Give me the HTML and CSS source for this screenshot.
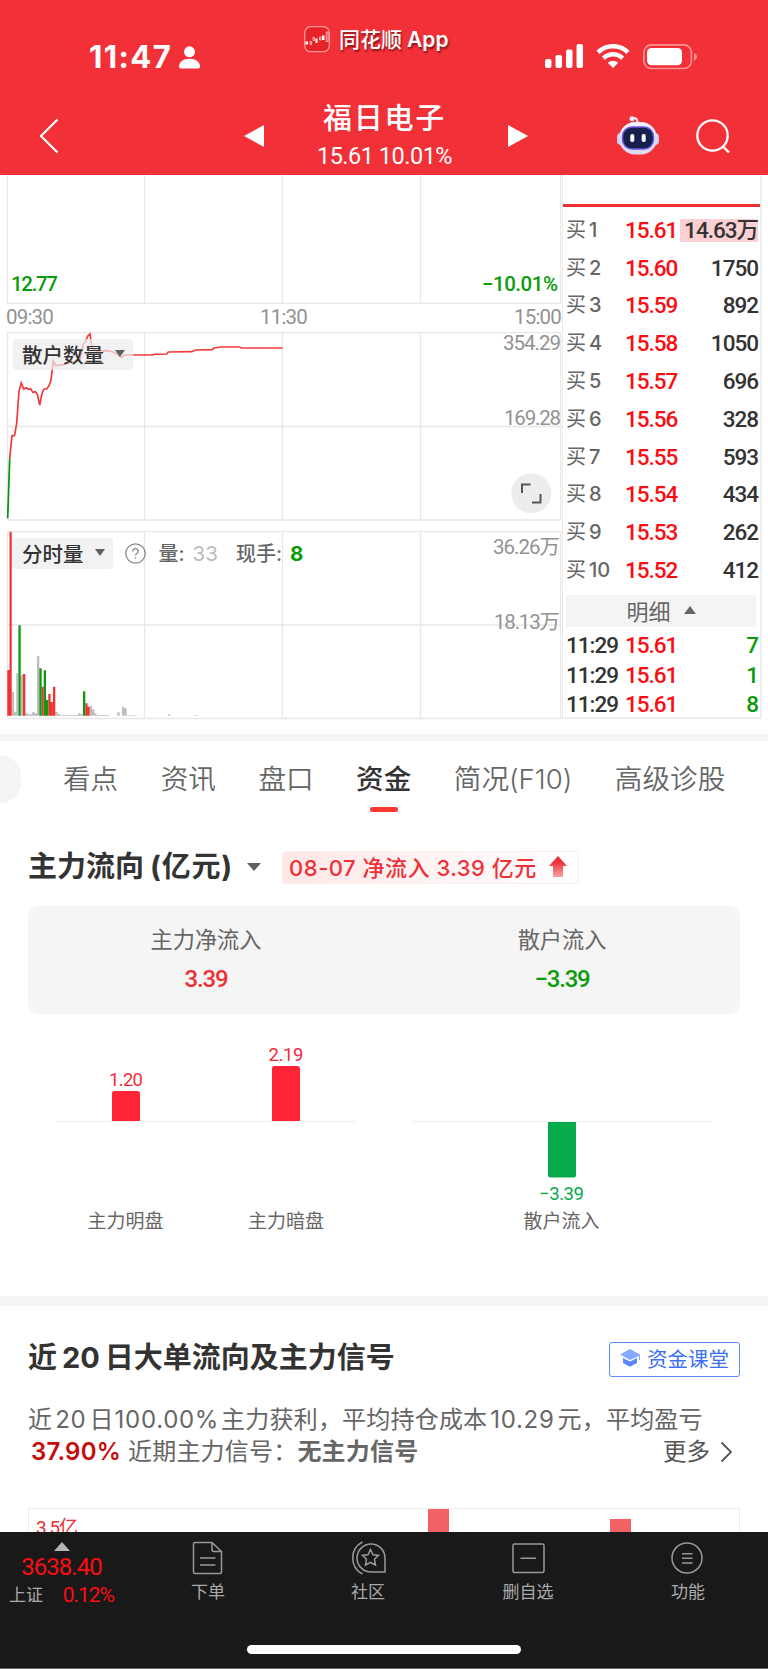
FILE: index.html
```html
<!DOCTYPE html>
<html lang="zh">
<head>
    <meta charset="UTF-8">
    <meta name="viewport" content="width=device-width, initial-scale=1.0">
    <title>福日电子 15.61</title>
    <link rel="stylesheet" href="styles.css">
</head>
<body>
    <header class="header">
        <div class="status">
            <div class="clock">
                <span class="time">11:47</span>
                <svg width="21" height="23" viewBox="0 0 21 23" fill="#fff"><circle cx="10.500" cy="5.800" r="5.500"/><path d="M0 20.500C0 15.500 5 12.800 10.500 12.800S21 15.500 21 20.500Q21 22.500 19 22.500H2Q0 22.500 0 20.500Z"/></svg>
            </div>
            <div class="brand">
                <svg width="26" height="27" viewBox="0 0 26 27"><rect x=".7" y=".7" width="24.600" height="25" rx="6" fill="#e62327" stroke="#ff9698" stroke-width="1.300"/><path d="M1.500 15.500h2.500v3H1.500zM11.500 12.500h2v4.500h-2zM18 9.500h2.500v4.500H18z" fill="#fff"/><path d="M6 15.500h1.500v3H6zM9 11.500h1.500v3H9zM15.500 11h1.500v3h-1.500zM22.300 6h1.700v9.500h-1.700z" fill="none" stroke="#ffd5d5" stroke-width=".8"/></svg>
                <span class="brand-name">同花顺<b>App</b></span>
            </div>
            <div class="signals">
                <svg width="38" height="24" viewBox="0 0 38 24" fill="#fff"><rect y="15" width="6.500" height="9" rx="2"/><rect x="10.500" y="11" width="6.500" height="13" rx="2"/><rect x="21" y="5.500" width="6.500" height="18.500" rx="2"/><rect x="31.500" width="6.500" height="24" rx="2"/></svg>
                <svg width="34" height="24" viewBox="0 0 34 24"><g fill="none" stroke="#fff" stroke-width="4.600"><path d="M2 8.300C10.500.2 23.500.2 32 8.300"/><path d="M7.400 14.200C13 9 21 9 26.600 14.200"/></g><path d="M17 24L11.800 18.700C15 16 19 16 22.200 18.700Z" fill="#fff"/></svg>
                <svg width="55" height="26" viewBox="0 0 55 26"><rect x=".9" y=".9" width="47.500" height="23.600" rx="7.500" fill="none" stroke="#ff9092" stroke-width="1.700"/><rect x="4" y="4" width="35" height="17.300" rx="4.500" fill="#fff"/><path d="M51 8.700Q54 10 54 12.700T51 16.700Z" fill="#ff9092"/></svg>
            </div>
        </div>
        <nav class="nav">
            <svg class="back" width="20" height="36" viewBox="0 0 20 36"><path d="M18.500 1.500L2 18L18.500 34.500" fill="none" stroke="#fff" stroke-width="2.200"/></svg>
            <svg class="prev" width="20" height="22" viewBox="0 0 20 22"><path d="M0 11L20 0V22Z" fill="#fff"/></svg>
            <div class="stock">
                <h1>福日电子</h1>
                <p>15.61 10.01%</p>
            </div>
            <svg class="next" width="20" height="22" viewBox="0 0 20 22"><path d="M20 11L0 0V22Z" fill="#fff"/></svg>
            <svg class="robot" width="42" height="39" viewBox="0 0 42 39">
                <path d="M15 2.500C20 1 20.500 4 20.500 8" fill="none" stroke="#e8e3f5" stroke-width="2.200"/>
                <circle cx="15" cy="2.800" r="2.500" fill="#eeeaf8"/>
                <rect y="17" width="8" height="12" rx="4" fill="#cfcdf0"/><rect x="34" y="17" width="8" height="12" rx="4" fill="#cfcdf0"/>
                <rect x="2" y="6" width="38" height="32.500" rx="16" fill="#dedcf5"/>
                <rect x="4" y="6.500" width="34" height="26" rx="13" fill="#f3f1fc"/>
                <rect x="5.500" y="11" width="31" height="22" rx="9.500" fill="#16214b" stroke="#6c55e8" stroke-width="1.500"/>
                <rect x="13.300" y="18" width="4" height="8" rx="1.800" fill="#fff"/><rect x="24.700" y="18" width="4" height="8" rx="1.800" fill="#fff"/>
            </svg>
            <svg class="search" width="36" height="36" viewBox="0 0 36 36" fill="none" stroke="#fff" stroke-width="2.300"><circle cx="16.500" cy="16.500" r="15.200"/><path d="M26.500 27L33 33.500"/></svg>
        </nav>
    </header>

    <section class="quote">
        <div class="charts">
            <svg class="pane pane-price" width="562" height="129" viewBox="0 0 562 129">
                <path class="grid" d="M7.500 0V128.500H560.500V0M144.500 0V128M282.500 0V128M420.500 0V128"/>
                <text class="num green" x="11" y="116" textLength="47">12.77</text>
                <text class="num green" x="482" y="116" textLength="76">−10.01%</text>
            </svg>
            <div class="hours"><span>09:30</span><span>11:30</span><span>15:00</span></div>
            <div class="pane-box">
                <svg class="pane" width="562" height="189" viewBox="0 0 562 189">
                    <path class="grid" d="M7.500 .5H560.500V188H7.500ZM144.500 0V188M282.500 0V188M420.500 0V188M7 94.500H560"/>
                    <path d="M7.700 186.300L9.700 126.300" fill="none" stroke="#0a8f12" stroke-width="1.700"/>
                    <polyline fill="none" stroke="#f23a3c" stroke-width="1.700" points="9.700,126.300 12,103.700 14.500,103.700 16.700,91.300 19,59 21.300,51 23.700,57 26,55.700 28.300,57.300 30.700,56.700 32.700,60.300 35.300,59.700 37.300,62.300 39.700,73 42,61.300 44,57 46.700,57 49,53.700 51,48 53.300,29 55.700,33.700 63.300,32.700 73.300,29.700 80,28 83.300,12.300 85.300,9.700 87.700,4 90,2 92,16.300 96.700,19 108.300,18.700 115,20.700 121.700,25.700 124,23 152.300,23 154,22.300 166.700,22 168.300,20 191.700,19.700 195.700,18 212.300,17.700 214,16 220.700,15 239.300,15 241.700,16 282.700,16"/>
                    <text class="num grey" x="503" y="18" textLength="58">354.29</text>
                    <text class="num grey" x="504" y="92.500" textLength="57">169.28</text>
                    <circle cx="531.300" cy="161.300" r="20" fill="#ededed"/>
                    <path d="M522 161V152.500H530.500M532 170.500H540.500V162" fill="none" stroke="#555" stroke-width="2"/>
                </svg>
                <div class="tools">
                    <span class="pill">散户数量<i class="caret"></i></span>
                </div>
            </div>
            <div class="pane-box pane-volume">
                <svg class="pane" width="562" height="189" viewBox="0 0 562 189">
                    <path class="grid" d="M7.500 .5H560.500V187.500H7.500ZM144.500 0V187M282.500 0V187M420.500 0V187M7 94H560"/>
                    <path fill="#bdbdbd" d="M11.700 161h2.300v23.700h-2.300zM14 180.700h2.300v4H14zM16.300 142.300h2.100v42.400h-2.100zM20.700 143.700h2.300v41h-2.300zM25.300 181.700h2.300v3h-2.300zM27.600 183.300h4.700v1.400h-4.700zM32.300 181h2.300v3.700h-2.300zM34.600 182.300h2.400v2.400h-2.400zM37 125h2.300v59.700H37zM55.300 180.700h2.300v4h-2.300zM57.600 183H60v1.700h-2.400zM60 184h18v.7H60zM78.300 182.300h2.300v2.400h-2.300zM80.600 183.300H83v1.400h-2.400zM89.700 175H92v9.700h-2.300zM92 178.300h2.300v6.400H92zM94.300 182.300h2.300v2.400h-2.300zM97 184h12v.7H97zM117.300 181.300h2.300v3.400h-2.300zM122 175.700h2.300v9H122zM124.300 177.300h2.300v7.400h-2.300zM127 184.200h10v.5h-10zM168 183.200h2v1.500h-2zM194 184.200h4v.5h-4z"/>
                    <path fill="#f23232" d="M7.300 139h2.200v45.700H7.300zM9.500 .7h2.200v184H9.500zM23 143h2.300v41.700H23zM41.700 155.700h2v29h-2zM48.300 163h2.300v21.700h-2.300zM50.600 171h2.300v13.700h-2.300zM53 155.700h2.300v29H53zM85.300 172.300h2.300v12.400h-2.300zM87.600 175.700h2.100v9h-2.100z"/>
                    <path fill="#129612" d="M18.400 94.300h2.300v90.400h-2.300zM39.300 137.300h2.400v47.400h-2.400zM43.700 139.300H46v45.400h-2.300zM46 169h2.300v15.700H46zM83 160.300h2.300v24.400H83z"/>
                    <text class="num grey" x="493" y="23" textLength="67">36.26万</text>
                    <text class="num grey" x="494" y="98" textLength="66">18.13万</text>
                </svg>
                <div class="tools">
                    <span class="pill">分时量<i class="caret"></i></span>
                    <svg class="help" width="21" height="21" viewBox="0 0 21 21"><circle cx="10.500" cy="10.500" r="9.700" fill="none" stroke="#888" stroke-width="1.300"/><path d="M7.700 8.500C7.700 4.500 13.300 4.700 13.300 8.200C13.300 10.200 10.500 10.300 10.500 12.600M10.500 14.300V15.800" fill="none" stroke="#888" stroke-width="1.300"/></svg>
                    <span class="stat">量:</span><span class="stat-num muted">33</span>
                    <span class="stat stat-hand">现手:</span><span class="stat-num up">8</span>
                </div>
            </div>
        </div>

        <aside class="book">
            <ul class="orders">
                <li><span class="lv">买<b>1</b></span><span class="price">15.61</span><span class="vol"><mark>14.63万</mark></span></li>
                <li><span class="lv">买<b>2</b></span><span class="price">15.60</span><span class="vol">1750</span></li>
                <li><span class="lv">买<b>3</b></span><span class="price">15.59</span><span class="vol">892</span></li>
                <li><span class="lv">买<b>4</b></span><span class="price">15.58</span><span class="vol">1050</span></li>
                <li><span class="lv">买<b>5</b></span><span class="price">15.57</span><span class="vol">696</span></li>
                <li><span class="lv">买<b>6</b></span><span class="price">15.56</span><span class="vol">328</span></li>
                <li><span class="lv">买<b>7</b></span><span class="price">15.55</span><span class="vol">593</span></li>
                <li><span class="lv">买<b>8</b></span><span class="price">15.54</span><span class="vol">434</span></li>
                <li><span class="lv">买<b>9</b></span><span class="price">15.53</span><span class="vol">262</span></li>
                <li><span class="lv">买<b>10</b></span><span class="price">15.52</span><span class="vol">412</span></li>
            </ul>
            <div class="detail-head">明细<i class="caret-up"></i></div>
            <ul class="ticks">
                <li><span>11:29</span><span class="price">15.61</span><span class="vol">7</span></li>
                <li><span>11:29</span><span class="price">15.61</span><span class="vol">1</span></li>
                <li><span>11:29</span><span class="price">15.61</span><span class="vol">8</span></li>
            </ul>
        </aside>
    </section>

    <section class="funds">
        <div class="tabs">
            <span class="tab-more"></span>
            <span class="tab">看点</span>
            <span class="tab">资讯</span>
            <span class="tab">盘口</span>
            <span class="tab active">资金</span>
            <span class="tab">简况(F10)</span>
            <span class="tab">高级诊股</span>
        </div>
        <div class="flow-head">
            <h2>主力流向<span class="unit">(亿元)</span></h2>
            <i class="caret"></i>
            <div class="tag">
                <span class="tag-text">08-07 净流入 3.39 亿元</span>
                <svg width="18" height="22" viewBox="0 0 18 22"><defs><linearGradient id="rise" x1="0" y1="0" x2="0" y2="1"><stop offset=".3" stop-color="#ee3038"/><stop offset="1" stop-color="#f9a5a7"/></linearGradient></defs><path d="M9 0L18 10H14V21H4V10H0Z" fill="url(#rise)"/></svg>
            </div>
        </div>
        <div class="summary">
            <div><p>主力净流入</p><strong class="in">3.39</strong></div>
            <div><p>散户流入</p><strong class="out">−3.39</strong></div>
        </div>
        <svg class="flow-chart" width="768" height="281" viewBox="0 0 768 281">
            <path d="M56 107.500H356M412 107.500H712" stroke="#f1f1f1" stroke-width="1.500"/>
            <path d="M112 107V79.500Q112 77 114.500 77H137.500Q140 77 140 79.500V107ZM272 107V54.500Q272 52 274.500 52H297.500Q300 52 300 54.500V107Z" fill="#ff2436"/>
            <path d="M548 108V161Q548 163.500 550.500 163.500H573.500Q576 163.500 576 161V108Z" fill="#07aa4b"/>
            <g class="bar-value" text-anchor="middle">
                <text x="126" y="72" textLength="34" fill="#f5293a">1.20</text>
                <text x="286" y="46.500" textLength="35" fill="#f5293a">2.19</text>
                <text x="561.500" y="186" textLength="45" fill="#07aa4b">−3.39</text>
            </g>
            <g class="bar-name" text-anchor="middle">
                <text x="125.500" y="214">主力明盘</text>
                <text x="286" y="214">主力暗盘</text>
                <text x="561.500" y="214">散户流入</text>
            </g>
        </svg>
    </section>

    <section class="signal">
        <div class="signal-head">
            <h2>近<span class="n">20</span>日大单流向及主力信号</h2>
            <a class="course">
                <svg width="20" height="18" viewBox="0 0 20 18"><path d="M10 0L20 5.500V11H19V7L10 11L0 5.500Z" fill="#86a8ff"/><path d="M3 9L10 12.500L17 9V14L10 17.800L3 14Z" fill="#5c86fb"/></svg>
                资金课堂
            </a>
        </div>
        <p class="desc">近<span class="n">20</span>日<span class="n0">100.00%</span>主力获利，平均持仓成本<span class="n">10.29</span>元，平均盈亏</p>
        <div class="desc-row">
            <p class="desc"><b class="rate">37.90%</b>近期主力信号：<b>无主力信号</b></p>
            <span class="more">更多<svg width="13" height="22" viewBox="0 0 13 22"><path d="M1.500 1.500L11 11L1.500 20.500" fill="none" stroke="#555" stroke-width="1.800"/></svg></span>
        </div>
        <div class="history">
            <svg width="710" height="160" viewBox="0 0 710 160">
                <text x="7" y="24.500" class="axis" textLength="42">3.5亿</text>
                <path d="M399 0H420V160H399ZM581 10H602V160H581Z" fill="#f26165"/>
            </svg>
        </div>
    </section>

    <footer class="dock">
        <div class="dock-row">
            <div class="index">
                <i class="caret-up"></i>
                <span class="index-value">3638.40</span>
                <div class="index-row"><span>上证</span><span class="index-rate">0.12%</span></div>
            </div>
            <div class="dock-item">
                <svg width="36" height="34" viewBox="0 0 36 34"><g transform="translate(-1 0)"><path d="M23 1.500H6Q4.500 1.500 4.500 3V31Q4.500 32.500 6 32.500H31Q32.500 32.500 32.500 31V10.500ZM23 1.500V9Q23 10.500 24.500 10.500H32.500M11 17H26.500M11 24H26.500"/></g></svg>
                <span>下单</span>
            </div>
            <div class="dock-item">
                <svg width="36" height="34" viewBox="0 0 36 34"><path d="M21 3A14 14 0 0 0 21 31H35V17A14 14 0 0 0 21 3ZM12.500 1A18 18 0 0 0 12.500 33M20.500 8.500L23 13.700L28.500 14.400L24.500 18.300L25.500 24L20.500 21.300L15.500 24L16.500 18.300L12.500 14.400L18 13.700Z"/></svg>
                <span>社区</span>
            </div>
            <div class="dock-item">
                <svg width="36" height="34" viewBox="0 0 36 34"><path d="M4.500 3H32.500Q34 3 34 4.500V30Q34 31.500 32.500 31.500H4.500Q3 31.500 3 30V4.500Q3 3 4.500 3ZM10.500 17.300H26"/></svg>
                <span>删自选</span>
            </div>
            <div class="dock-item">
                <svg width="36" height="34" viewBox="0 0 36 34"><circle cx="17" cy="17" r="15"/><path d="M12 12.700H22.500M12 17.300H22.500M12 22H22.500"/></svg>
                <span>功能</span>
            </div>
        </div>
        <div class="home-bar"></div>
    </footer>
</body>
</html>
```
FILE: styles.css
```css
* {
    box-sizing: border-box;
}
body {
    width: 768px;
    height: 1669px;
    margin: 0;
    display: flex;
    flex-direction: column;
    overflow: hidden;
    background-color: #fff;
    color: #333;
    font-family: Inter, "Noto Sans CJK SC", sans-serif;
}
h1, h2, p, ul {
    margin: 0;
    padding: 0;
    list-style: none;
}
svg {
    display: block;
    flex: none;
}

/* 顶部 */
.header {
    height: 175px;
    flex: none;
    background-color: #f23037;
    color: #fff;
}
.status {
    height: 88px;
    display: grid;
    grid-template-columns: 304px 241px 1fr;
}
.clock {
    display: flex;
    align-items: flex-start;
    padding: 38px 0 0 89px;
}
.clock svg {
    margin: 8px 0 0 7px;
}
.time {
    font-size: 31px;
    line-height: 38px;
    font-weight: 700;
    letter-spacing: 1.4px;
}
.brand {
    display: flex;
    align-items: flex-start;
    padding-top: 26px;
}
.brand-name {
    margin-left: 9px;
    font-size: 21px;
    line-height: 28px;
    font-weight: 500;
    text-shadow: 1px 2px 2px rgba(60, 0, 0, 0.6);
}
.brand-name b {
    margin-left: 5px;
    font-weight: 600;
}
.signals {
    display: flex;
    align-items: flex-start;
    gap: 13px;
    padding-top: 44px;
}
.nav {
    display: flex;
    align-items: flex-start;
}
.back {
    margin: 30px 0 0 39px;
}
.prev {
    margin: 37px 0 0 185px;
}
.stock {
    width: 244px;
    padding-right: 3px;
    text-align: center;
}
.stock h1 {
    margin-top: 9px;
    font-size: 29px;
    line-height: 44px;
    font-weight: 500;
    letter-spacing: 1.8px;
}
.stock p {
    font-family: Roboto, sans-serif;
    font-size: 23.5px;
    line-height: 30px;
    letter-spacing: -0.5px;
}
.next {
    margin-top: 37px;
}
.robot {
    margin: 28px 0 0 89px;
}
.search {
    margin: 31px 0 0 37px;
}

/* 分时图与盘口 */
.quote {
    height: 566px;
    flex: none;
    display: flex;
    border-bottom: 7px solid #f4f4f4;
}
.charts {
    width: 562px;
}
.grid {
    fill: none;
    stroke: #e8e8e8;
    stroke-width: 1.3;
}
.num {
    font-family: Roboto, "Noto Sans CJK SC", sans-serif;
    font-size: 20.5px;
}
.green {
    fill: #0a9c0a;
    font-weight: 500;
}
.grey {
    fill: #929292;
}
.hours {
    height: 28px;
    padding: 0 1px 0 6px;
    display: flex;
    justify-content: space-between;
    font-family: Roboto, sans-serif;
    font-size: 20.5px;
    line-height: 27px;
    letter-spacing: -0.8px;
    color: #929292;
}
.pane-box {
    position: relative;
    height: 189px;
}
.pane-volume {
    margin-top: 10px;
}
.tools {
    position: absolute;
    left: 13px;
    top: 7px;
    display: flex;
    align-items: center;
}
.pill {
    height: 31px;
    padding: 0 8px 2px 9px;
    display: flex;
    align-items: center;
    gap: 11px;
    border-radius: 3px;
    background-color: rgba(236, 236, 236, 0.7);
    font-size: 20.5px;
    font-weight: 500;
}
.caret {
    border: 5px solid transparent;
    border-top: 7px solid #606060;
    border-bottom: 0;
}
.caret-up {
    border: 6px solid transparent;
    border-bottom: 8px solid #666;
    border-top: 0;
}
.help {
    margin: 0 13px 0 12px;
}
.stat {
    font-size: 20px;
    line-height: 28px;
    font-weight: 500;
    color: #666;
}
.stat-hand {
    margin-left: 18px;
}
.stat-num {
    margin-left: 8px;
    font-size: 20.5px;
    line-height: 28px;
}
.muted {
    color: #bbb;
}
.up {
    color: #0a9c0a;
    font-weight: 700;
}
.book {
    width: 200px;
    height: 544px;
    padding: 29px 4px 0 3px;
    border-right: 2px solid #eee;
    border-bottom: 2px solid #eee;
    border-left: 1px solid #e8e8e8;
}
.orders {
    margin: 0 -4px 0 -3px;
    padding: 4px 4px 0 3px;
    border-top: 3px solid #ee2f33;
}
.orders li,
.ticks li {
    height: 37.8px;
    display: grid;
    grid-template-columns: 59px 50px 1fr;
    align-items: center;
    font-family: Roboto, "Noto Sans CJK SC", sans-serif;
    font-size: 22.5px;
    font-weight: 500;
    letter-spacing: -1px;
    white-space: nowrap;
}
.orders .lv {
    font-family: Inter, "Noto Sans CJK SC", sans-serif;
    font-size: 20px;
    font-weight: 400;
    letter-spacing: 0;
    line-height: 28px;
    color: #666;
}
.lv b {
    margin-left: 3px;
    font-weight: 500;
}
.price {
    color: #fb0d12;
}
.vol {
    text-align: right;
    margin-right: -2px;
}
.vol mark {
    display: inline-block;
    height: 23px;
    padding-left: 4px;
    line-height: 23px;
    background-color: #fbd0d2;
    color: inherit;
}
.detail-head {
    height: 32px;
    margin-top: 6px;
    padding-bottom: 2px;
    display: flex;
    justify-content: center;
    align-items: center;
    gap: 13px;
    background-color: #f4f4f4;
    font-size: 22px;
    color: #666;
}
.ticks {
    padding-top: 3px;
}
.ticks li {
    height: 29.8px;
}
.ticks .vol {
    color: #0a9c0a;
}

/* 资金 */
.funds {
    height: 565px;
    flex: none;
    display: flex;
    flex-direction: column;
    border-bottom: 10px solid #f4f4f4;
}
.tabs {
    height: 82px;
    padding-top: 14px;
    display: flex;
    align-items: flex-start;
}
.tab-more {
    width: 21px;
    height: 48px;
    flex: none;
    margin-right: 42px;
    border-radius: 0 24px 24px 0;
    background-color: #f4f4f4;
}
.tab {
    margin-right: 42.5px;
    font-size: 27.6px;
    line-height: 48px;
    font-weight: 350;
    white-space: nowrap;
    color: #666;
}
.tab:last-child {
    margin-right: 0;
}
.active {
    display: flex;
    flex-direction: column;
    align-items: center;
    font-weight: 500;
    color: #333;
}
.active::after {
    content: '';
    width: 28px;
    height: 5px;
    margin-top: 4px;
    border-radius: 3px;
    background-color: #fd382f;
}
.flow-head {
    height: 83px;
    padding: 5px 0 0 28px;
    display: flex;
    align-items: center;
}
h2 {
    font-size: 29px;
    font-weight: 700;
    line-height: 40px;
}
.unit {
    margin-left: 6px;
    letter-spacing: 0.8px;
}
.flow-head .caret {
    margin: 0 21px 0 14px;
    border-width: 8px 7px 0;
}
.tag {
    width: 297px;
    height: 33px;
    padding: 0 11px 0 6px;
    display: flex;
    align-items: center;
    justify-content: space-between;
    border: 1px solid #fdeeee;
    border-radius: 3px;
    background: linear-gradient(90deg, #ffe7e8, #fff);
    font-size: 22px;
    font-weight: 500;
    white-space: nowrap;
    color: #ee3038;
}
.tag-text {
    padding-bottom: 3px;
    letter-spacing: 0.5px;
}
.summary {
    width: 712px;
    height: 108px;
    margin: 0 28px;
    display: grid;
    grid-template-columns: 1fr 1fr;
    border-radius: 10px;
    background-color: #f5f5f5;
    text-align: center;
}
.summary p {
    padding-top: 17px;
    font-size: 22.2px;
    line-height: 34px;
    color: #666;
}
.summary strong {
    display: block;
    margin-top: 4px;
    font-family: Roboto, sans-serif;
    font-size: 24px;
    line-height: 36px;
    font-weight: 500;
    letter-spacing: -1.2px;
}
.in {
    color: #ee3038;
}
.out {
    color: #0a9c0a;
}
.bar-value {
    font-family: Roboto, sans-serif;
    font-size: 18.5px;
}
.bar-name {
    font-family: "Noto Sans CJK SC", sans-serif;
    font-size: 19px;
    fill: #666;
}

/* 主力信号 */
.signal {
    flex: 1;
    min-height: 0;
    padding: 30px 28px 0;
    overflow: hidden;
}
.signal-head {
    height: 46px;
    display: flex;
    justify-content: space-between;
    align-items: center;
}
.signal-head h2 {
    margin-top: -3px;
}
.signal-head .n {
    margin: 0 5px;
}
.course {
    width: 131px;
    height: 35px;
    padding-bottom: 2px;
    display: flex;
    align-items: center;
    justify-content: center;
    gap: 7px;
    border: 1.5px solid #5c8afc;
    border-radius: 3px;
    font-size: 20.5px;
    white-space: nowrap;
    color: #3d70f5;
}
.desc {
    font-size: 24px;
    line-height: 32px;
    letter-spacing: 0.2px;
    white-space: nowrap;
    color: #666;
}
.signal-head + .desc {
    margin-top: 22px;
}
.desc .n {
    margin: 0 3px;
    letter-spacing: 0.7px;
}
.desc .n0 {
    margin: 0 2px 0 1px;
    letter-spacing: 0.7px;
}
.desc-row {
    display: flex;
    justify-content: space-between;
}
.desc .rate {
    margin: 0 7px 0 3px;
    font-weight: 600;
    color: #c90a0a;
}
.more {
    padding-right: 7px;
    display: flex;
    align-items: center;
    gap: 10px;
    font-size: 23.5px;
    line-height: 32px;
    color: #555;
}
.history {
    height: 160px;
    margin-top: 40px;
    border: 1px solid #ececec;
}
.axis {
    font-family: Roboto, "Noto Sans CJK SC", sans-serif;
    font-size: 19px;
    fill: #ee3038;
}

/* 底部栏 */
.dock {
    height: 137px;
    flex: none;
    background-color: #191919;
    border-bottom: 1px solid #666;
    color: #aaa;
}
.dock-row {
    height: 113px;
    display: grid;
    grid-template-columns: 128px repeat(4, 160px);
}
.index {
    padding: 10px 5px 0 0;
    display: flex;
    flex-direction: column;
    align-items: center;
    font-family: Roboto, "Noto Sans CJK SC", sans-serif;
}
.index .caret-up {
    border-width: 0 8px 9px;
    border-bottom-color: #b4b4b4;
}
.index-value {
    margin-top: 2px;
    font-size: 24px;
    line-height: 28px;
    letter-spacing: -1px;
    color: #fb0d12;
}
.index-row {
    width: 105px;
    display: flex;
    justify-content: space-between;
    align-items: center;
    font-size: 17px;
    line-height: 28px;
}
.index-rate {
    font-size: 21px;
    letter-spacing: -1px;
    color: #fb0d12;
}
.dock-item {
    padding-top: 9px;
    display: flex;
    flex-direction: column;
    align-items: center;
    font-size: 17px;
    line-height: 34px;
}
.dock-item svg {
    fill: none;
    stroke: #999;
    stroke-width: 1.5;
}
.home-bar {
    width: 274px;
    height: 9px;
    margin: 0 auto;
    border-radius: 5px;
    background-color: #fff;
}
```
